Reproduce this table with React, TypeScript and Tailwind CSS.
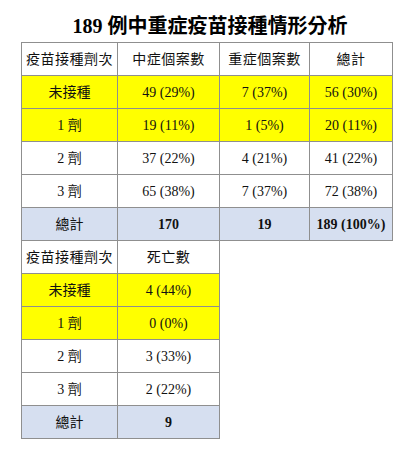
const font = {
  fontFamily: '"Liberation Serif", "Noto Sans CJK TC", serif',
};

type Row = { label: string; cells: string[]; bg: string; bold?: boolean };

const mainRows: Row[] = [
  { label: "未接種", cells: ["49 (29%)", "7 (37%)", "56 (30%)"], bg: "bg-[#ffff00]" },
  { label: "1 劑", cells: ["19 (11%)", "1 (5%)", "20 (11%)"], bg: "bg-[#ffff00]" },
  { label: "2 劑", cells: ["37 (22%)", "4 (21%)", "41 (22%)"], bg: "bg-white" },
  { label: "3 劑", cells: ["65 (38%)", "7 (37%)", "72 (38%)"], bg: "bg-white" },
  { label: "總計", cells: ["170", "19", "189 (100%)"], bg: "bg-[#d6dff0]", bold: true },
];

const deathRows: Row[] = [
  { label: "未接種", cells: ["4 (44%)"], bg: "bg-[#ffff00]" },
  { label: "1 劑", cells: ["0 (0%)"], bg: "bg-[#ffff00]" },
  { label: "2 劑", cells: ["3 (33%)"], bg: "bg-white" },
  { label: "3 劑", cells: ["2 (22%)"], bg: "bg-white" },
  { label: "總計", cells: ["9"], bg: "bg-[#d6dff0]", bold: true },
];

const cell = "border border-[#8f8f8f] text-center p-0 text-[14px] text-[#111]";

function DataTable({
  headers,
  widths,
  rows,
}: {
  headers: string[];
  widths: string[];
  rows: Row[];
}) {
  return (
    <table className="border-collapse table-fixed" style={font}>
      <colgroup>
        {widths.map((w, i) => (
          <col key={i} className={w} />
        ))}
      </colgroup>
      <tbody>
        <tr className="h-[33px] bg-white">
          {headers.map((h) => (
            <td key={h} className={`${cell} tracking-[0.5px]`}>
              {h}
            </td>
          ))}
        </tr>
        {rows.map((r) => (
          <tr key={r.label} className={`h-[33px] ${r.bg}`}>
            <td className={cell}>{r.label}</td>
            {r.cells.map((c, i) => (
              <td key={i} className={`${cell} ${r.bold ? "font-bold" : ""}`}>
                {c}
              </td>
            ))}
          </tr>
        ))}
      </tbody>
    </table>
  );
}

export default function App() {
  return (
    <div className="w-[420px] h-[450px] bg-white" style={font}>
      <div className="h-[42px] pt-[14px] text-center text-[20px] leading-[24px] font-bold text-black">
        189 例中重症疫苗接種情形分析
      </div>
      <div className="pl-[21px]">
        <DataTable
          headers={["疫苗接種劑次", "中症個案數", "重症個案數", "總計"]}
          widths={["w-[96px]", "w-[102px]", "w-[90px]", "w-[83px]"]}
          rows={mainRows}
        />
        <div className="-mt-px">
          <DataTable
            headers={["疫苗接種劑次", "死亡數"]}
            widths={["w-[96px]", "w-[102px]"]}
            rows={deathRows}
          />
        </div>
      </div>
    </div>
  );
}
